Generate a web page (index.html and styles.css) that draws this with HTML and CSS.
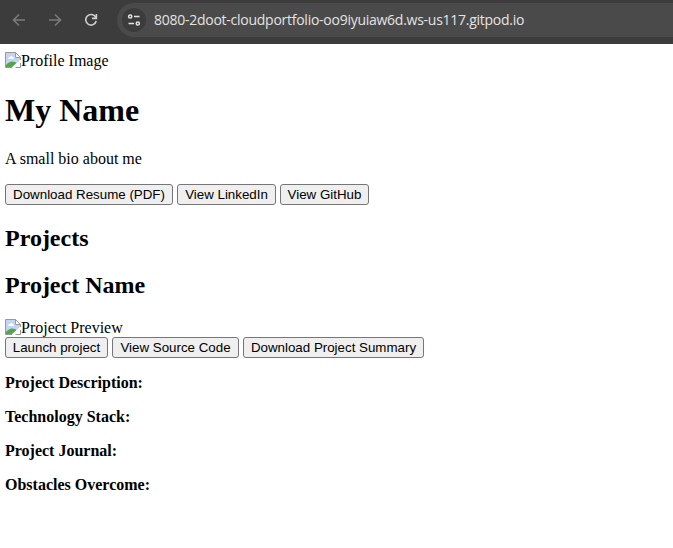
FILE: index.html
```html
<!DOCTYPE html>
<html lang="en">
<head>
<meta charset="utf-8">
<title>Portfolio</title>
<link rel="stylesheet" href="styles.css">
</head>
<body>
<header class="toolbar">
  <svg class="nav dim" viewBox="0 0 16 16"><path d="M14 8H3M8 2.5L2.5 8L8 13.5"/></svg>
  <svg class="nav dim" viewBox="0 0 16 16"><path d="M2 8H13M8 2.5L13.5 8L8 13.5"/></svg>
  <svg class="nav" viewBox="0 0 16 16"><path d="M12.7 5.2A5.3 5.3 0 1 0 13.2 9M13.4 2V6.4H9"/></svg>
  <div class="address">
    <span class="site"><svg class="tune" viewBox="0 0 16 16"><circle cx="4.2" cy="4.5" r="1.6"/><path d="M8 4.5H13.5M2.5 11.5H8"/><circle cx="11.8" cy="11.5" r="1.6"/></svg></span>
    <span class="url">8080-2doot-cloudportfolio-oo9iyuiaw6d.ws-us117.gitpod.io</span>
  </div>
</header>
<main class="page">
  <div class="image"><svg class="broken" viewBox="0 0 16 16"><path class="sky" d="M1 1H10V6H15V8L7 15H1Z"/><path class="cloud" d="M3 7Q3 5 5 5Q6 3 8 5Q9 5 9 7Z"/><path class="hill" d="M1 15V13Q5 8 10 10L11.5 11L7 15Z"/><path class="paper" d="M7 15.5H.5V.5H10.5L15.5 5.5V8M10.5 .5V5.5H15.5"/><path class="corner" d="M15.5 11V15.5H10.5"/></svg><span>Profile Image</span></div>
  <h1>My Name</h1>
  <p class="bio">A small bio about me</p>
  <div class="buttons"><button class="b1">Download Resume (PDF)</button><button class="b2">View LinkedIn</button><button class="b3">View GitHub</button></div>
  <h2>Projects</h2>
  <h2 class="project">Project Name</h2>
  <div class="image"><svg class="broken" viewBox="0 0 16 16"><path class="sky" d="M1 1H10V6H15V8L7 15H1Z"/><path class="cloud" d="M3 7Q3 5 5 5Q6 3 8 5Q9 5 9 7Z"/><path class="hill" d="M1 15V13Q5 8 10 10L11.5 11L7 15Z"/><path class="paper" d="M7 15.5H.5V.5H10.5L15.5 5.5V8M10.5 .5V5.5H15.5"/><path class="corner" d="M15.5 11V15.5H10.5"/></svg><span>Project Preview</span></div>
  <div class="buttons"><button class="b4">Launch project</button><button class="b5">View Source Code</button><button class="b6">Download Project Summary</button></div>
  <p class="label">Project Description:</p>
  <p class="label">Technology Stack:</p>
  <p class="label">Project Journal:</p>
  <p class="label">Obstacles Overcome:</p>
</main>
</body>
</html>
```
FILE: styles.css
```css
body { margin: 0; background: #fff; color: #000; font: 16px/18px "Liberation Serif", serif; }
.toolbar { box-sizing: border-box; height: 44px; padding: 3px 0 7px 11px; background: #3c3c3c; display: flex; align-items: center; }
.nav { width: 16px; height: 16px; margin-right: 20px; fill: none; stroke: #d0d0d0; stroke-width: 1.6; flex: none; }
.dim { stroke: #7b7b7b; }
.address { flex: 1; height: 34px; margin-left: -2px; background: #4a4a4a; border-radius: 17px 0 0 17px; display: flex; align-items: center; }
.site { width: 24px; height: 24px; border-radius: 50%; background: #3c3c3c; margin: 0 8px 0 5px; display: grid; place-items: center; }
.tune { width: 16px; height: 16px; fill: none; stroke: #e3e3e3; stroke-width: 1.5; }
.url { color: #e3e3e3; font: 14px/20px "Open Sans", sans-serif; letter-spacing: -.26px; white-space: nowrap; }
.page { padding: 8px 5px; }
.image { display: flex; height: 18px; }
.broken { width: 16px; height: 16px; }
h1 { font-size: 32px; line-height: 37px; margin: 22px 0 21px; }
h2 { font-size: 24px; line-height: 27px; margin: 20px 0; }
p { margin: 16px 0; }
.buttons { display: flex; gap: 4px; }
button { box-sizing: border-box; height: 21px; padding: 0; border: 1px solid #767676; border-radius: 3px; background: #efefef; color: #000; font: 13.333px/15px "Liberation Sans", sans-serif; white-space: nowrap; }
.b1 { width: 168px; } .b2 { width: 99px; } .b3 { width: 89px; }
.b4 { width: 103px; } .b5 { width: 127px; } .b6 { width: 181px; }
.label { font-weight: bold; }
.sky { fill: #c3d5f4; }
.cloud { fill: #fff; }
.hill { fill: #55a647; }
.paper, .corner { fill: none; stroke: #999; }
```
